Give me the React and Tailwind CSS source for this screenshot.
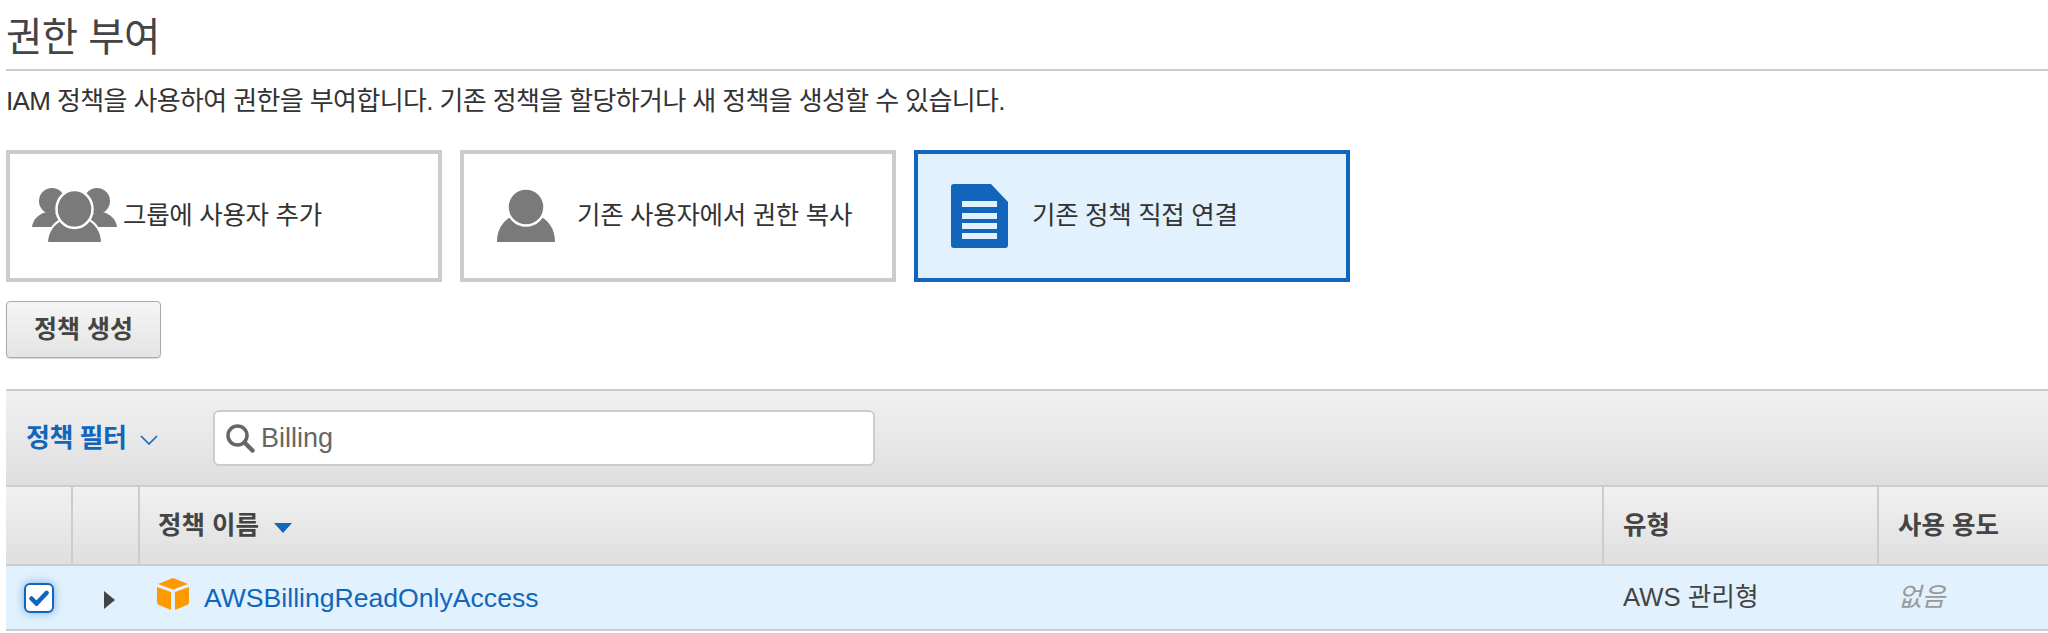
const fontStack = "font-['Liberation_Sans','Noto_Sans_CJK_KR',sans-serif]";

function GroupIcon() {
  return (
    <svg width="86" height="56" viewBox="0 0 86 56" className="shrink-0">
      <path d="M0 39c1-7 5-11 11-14l8-2 6 4 4 12z" fill="#7a7a7a" />
      <path d="M85 39c-1-7-5-11-11-14l-8-2-6 4-4 12z" fill="#7a7a7a" />
      <circle cx="20" cy="13" r="13" fill="#7a7a7a" />
      <circle cx="65" cy="13" r="13" fill="#7a7a7a" />
      <path d="M15 55c0-12 8-21 16-24h24c8 3 15 12 15 24z" fill="#7a7a7a" stroke="#fff" strokeWidth="2" />
      <ellipse cx="42.5" cy="21" rx="18" ry="19" fill="#7a7a7a" stroke="#fff" strokeWidth="2.5" />
    </svg>
  );
}

function UserIcon() {
  return (
    <svg width="58" height="54" viewBox="0 0 58 54" className="shrink-0">
      <path d="M0 53c0-14 7-22 17-27l12 4 12-4c10 5 17 13 17 27z" fill="#7a7a7a" />
      <ellipse cx="29" cy="18" rx="18.5" ry="18.5" fill="#7a7a7a" stroke="#fff" strokeWidth="2.5" />
    </svg>
  );
}

function DocIcon() {
  return (
    <svg width="57" height="64" viewBox="0 0 57 64" className="shrink-0">
      <path d="M3 0h37l17 18v43a3 3 0 0 1-3 3H3a3 3 0 0 1-3-3V3a3 3 0 0 1 3-3z" fill="#1166bb" />
      <rect x="11" y="17" width="35" height="6" fill="#e1f1fd" />
      <rect x="11" y="29" width="35" height="6" fill="#e1f1fd" />
      <rect x="11" y="39" width="35" height="6" fill="#e1f1fd" />
      <rect x="11" y="49" width="35" height="6" fill="#e1f1fd" />
    </svg>
  );
}

function CubeIcon() {
  return (
    <svg width="32" height="32" viewBox="0 0 32 32" className="shrink-0">
      <path d="M16 0l15 6-15 5.500L1 6z" fill="#ff9900" />
      <path d="M0 9l14 5v18L2 27a3 3 0 0 1-2-3z" fill="#ff9900" />
      <path d="M32 9l-14 5v18l12-5a3 3 0 0 0 2-3z" fill="#ff9900" />
    </svg>
  );
}

function OptionCard({ icon, label, active, className }) {
  return (
    <div
      className={`flex h-[132px] w-[436px] shrink-0 items-center border-4 ${
        active ? "border-[#1166bb] bg-[#e1f1fd]" : "border-[#cccccc] bg-white"
      } ${className}`}
    >
      {icon}
      <span className="text-[25.5px] leading-none tracking-[-0.3px] text-[#333]">{label}</span>
    </div>
  );
}

export default function App() {
  return (
    <div className={`h-[633px] w-[2048px] overflow-hidden bg-white pl-[6px] pt-[14px] ${fontStack}`}>
      <h1 className="h-[57px] border-b-2 border-[#cccccc] text-[39.5px] leading-[46px] tracking-[-0.5px] text-[#444]">
        권한 부여
      </h1>
      <p className="mt-[16px] text-[26px] leading-[28px] tracking-[-0.62px] text-[#333]">
        IAM 정책을 사용하여 권한을 부여합니다. 기존 정책을 할당하거나 새 정책을 생성할 수 있습니다.
      </p>

      <div className="mt-[35px] flex gap-[18px]">
        <OptionCard icon={<GroupIcon />} label="그룹에 사용자 추가" className="pl-[22px] gap-[5px]" />
        <OptionCard icon={<UserIcon />} label="기존 사용자에서 권한 복사" className="pl-[33px] gap-[22px]" />
        <OptionCard icon={<DocIcon />} label="기존 정책 직접 연결" active className="pl-[33px] gap-[24px]" />
      </div>

      <button className="mt-[19px] flex h-[57px] w-[155px] items-center justify-center rounded-[4px] border border-[#a9a9a9] bg-gradient-to-b from-[#f5f5f5] to-[#e4e4e4] text-[25px] font-bold text-[#444] shadow-[0_1px_1px_rgba(0,0,0,0.15)]">
        정책 생성
      </button>

      <div className="mt-[31px]">
        <div className="flex h-[98px] items-center border-y-2 border-[#cccccc] bg-gradient-to-b from-[#f1f1f1] to-[#dfdfdf] pl-[20px]">
          <span className="w-[100px] whitespace-nowrap text-[26px] font-bold tracking-[-0.5px] text-[#1166bb]">정책 필터</span>
          <svg width="18" height="10" viewBox="0 0 18 10" className="ml-[14px] mt-[4px]">
            <path d="M1 1l8 8 8-8" fill="none" stroke="#1166bb" strokeWidth="1.6" />
          </svg>
          <div className="ml-[55px] flex h-[56px] w-[662px] items-center rounded-[6px] border-2 border-[#cccccc] bg-white pl-[10px]">
            <svg width="30" height="30" viewBox="0 0 30 30">
              <circle cx="12.500" cy="12.500" r="9.500" fill="none" stroke="#666" strokeWidth="3.500" />
              <path d="M19.500 19.500l8 8" stroke="#666" strokeWidth="4.500" strokeLinecap="round" />
            </svg>
            <span className="ml-[6px] text-[27px] text-[#666]">Billing</span>
          </div>
        </div>

        <div className="flex h-[79px] border-b-2 border-[#cccccc] bg-gradient-to-b from-[#f1f1f1] to-[#dfdfdf] text-[25.5px] font-bold text-[#444]">
          <div className="w-[67px] border-r-2 border-[#cccccc]" />
          <div className="w-[67px] border-r-2 border-[#cccccc]" />
          <div className="flex w-[1464px] items-center border-r-2 border-[#cccccc] pl-[18px]">
            <span>정책 이름</span>
            <svg width="18" height="10" viewBox="0 0 18 10" className="ml-[15px] mt-[5px]">
              <path d="M0 0h18l-9 10z" fill="#1166bb" />
            </svg>
          </div>
          <div className="flex w-[275px] items-center border-r-2 border-[#cccccc] pl-[19px]">유형</div>
          <div className="flex items-center pl-[19px]">사용 용도</div>
        </div>

        <div className="flex h-[65px] items-center border-b-2 border-[#cccccc] bg-[#e1f1fd] text-[25.7px]">
          <div className="flex w-[67px] justify-center pr-[1px]">
            <div className="flex size-[30px] items-center justify-center rounded-[6px] border-2 border-[#1166bb] bg-white shadow-[0_0_8px_rgba(17,102,187,0.5)]">
              <svg width="20" height="16" viewBox="0 0 20 16">
                <path d="M2.500 8.500l5 5L17.500 3" fill="none" stroke="#1166bb" strokeWidth="4.500" strokeLinecap="round" />
              </svg>
            </div>
          </div>
          <div className="flex w-[67px] justify-center pl-[6px] pt-[4px]">
            <svg width="11" height="18" viewBox="0 0 11 18">
              <path d="M0 0l11 9-11 9z" fill="#444" />
            </svg>
          </div>
          <div className="flex w-[1464px] items-center pl-[17px]">
            <div className="mb-[8px]">
              <CubeIcon />
            </div>
            <a className="ml-[15px] mt-[2px] text-[26.6px] leading-none text-[#1166bb]">AWSBillingReadOnlyAccess</a>
          </div>
          <div className="w-[275px] pl-[19px] text-[#444]">AWS 관리형</div>
          <div className="pl-[19px] italic text-[#999]">없음</div>
        </div>
      </div>
    </div>
  );
}
